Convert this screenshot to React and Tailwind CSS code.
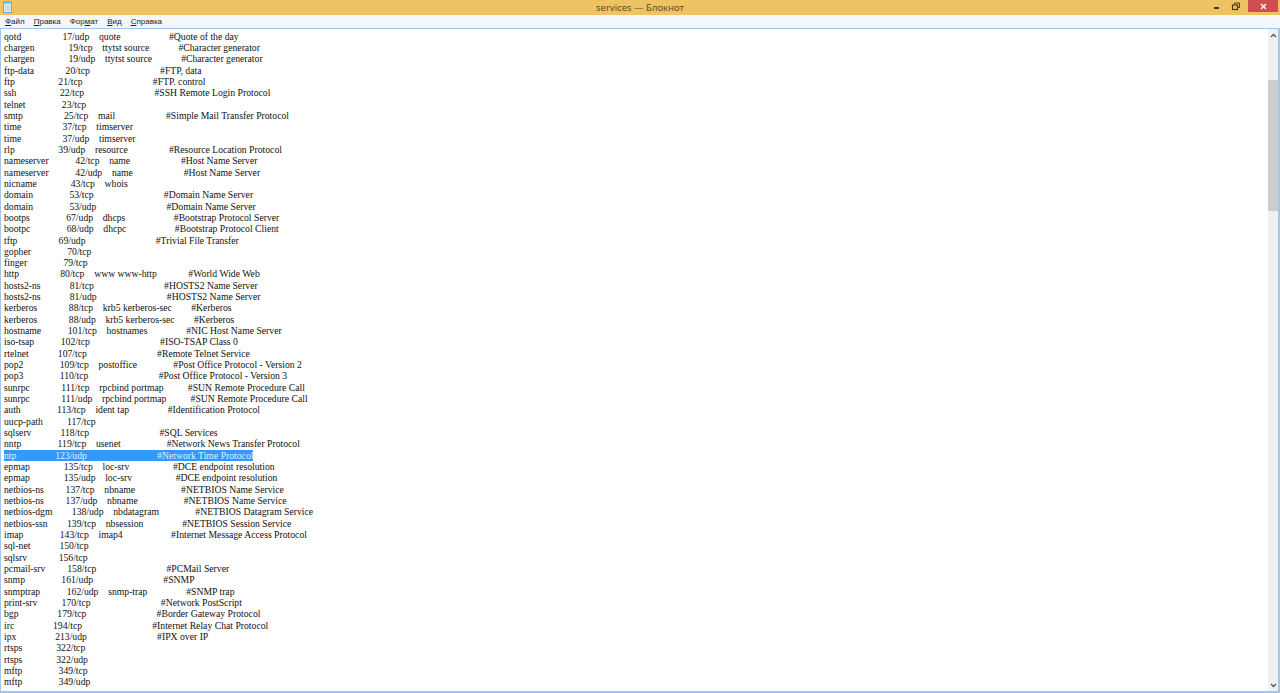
const sp = (n) => ' '.repeat(n);

// name, port, alias, comment
const rows = [
  ['qotd', '17/udp', 'quote', '#Quote of the day'],
  ['chargen', '19/tcp', 'ttytst source', '#Character generator'],
  ['chargen', '19/udp', 'ttytst source', '#Character generator'],
  ['ftp-data', '20/tcp', '', '#FTP, data'],
  ['ftp', '21/tcp', '', '#FTP. control'],
  ['ssh', '22/tcp', '', '#SSH Remote Login Protocol'],
  ['telnet', '23/tcp', '', ''],
  ['smtp', '25/tcp', 'mail', '#Simple Mail Transfer Protocol'],
  ['time', '37/tcp', 'timserver', ''],
  ['time', '37/udp', 'timserver', ''],
  ['rlp', '39/udp', 'resource', '#Resource Location Protocol'],
  ['nameserver', '42/tcp', 'name', '#Host Name Server'],
  ['nameserver', '42/udp', 'name', '#Host Name Server'],
  ['nicname', '43/tcp', 'whois', ''],
  ['domain', '53/tcp', '', '#Domain Name Server'],
  ['domain', '53/udp', '', '#Domain Name Server'],
  ['bootps', '67/udp', 'dhcps', '#Bootstrap Protocol Server'],
  ['bootpc', '68/udp', 'dhcpc', '#Bootstrap Protocol Client'],
  ['tftp', '69/udp', '', '#Trivial File Transfer'],
  ['gopher', '70/tcp', '', ''],
  ['finger', '79/tcp', '', ''],
  ['http', '80/tcp', 'www www-http', '#World Wide Web'],
  ['hosts2-ns', '81/tcp', '', '#HOSTS2 Name Server'],
  ['hosts2-ns', '81/udp', '', '#HOSTS2 Name Server'],
  ['kerberos', '88/tcp', 'krb5 kerberos-sec', '#Kerberos'],
  ['kerberos', '88/udp', 'krb5 kerberos-sec', '#Kerberos'],
  ['hostname', '101/tcp', 'hostnames', '#NIC Host Name Server'],
  ['iso-tsap', '102/tcp', '', '#ISO-TSAP Class 0'],
  ['rtelnet', '107/tcp', '', '#Remote Telnet Service'],
  ['pop2', '109/tcp', 'postoffice', '#Post Office Protocol - Version 2'],
  ['pop3', '110/tcp', '', '#Post Office Protocol - Version 3'],
  ['sunrpc', '111/tcp', 'rpcbind portmap', '#SUN Remote Procedure Call'],
  ['sunrpc', '111/udp', 'rpcbind portmap', '#SUN Remote Procedure Call'],
  ['auth', '113/tcp', 'ident tap', '#Identification Protocol'],
  ['uucp-path', '117/tcp', '', ''],
  ['sqlserv', '118/tcp', '', '#SQL Services'],
  ['nntp', '119/tcp', 'usenet', '#Network News Transfer Protocol'],
  ['ntp', '123/udp', '', '#Network Time Protocol'],
  ['epmap', '135/tcp', 'loc-srv', '#DCE endpoint resolution'],
  ['epmap', '135/udp', 'loc-srv', '#DCE endpoint resolution'],
  ['netbios-ns', '137/tcp', 'nbname', '#NETBIOS Name Service'],
  ['netbios-ns', '137/udp', 'nbname', '#NETBIOS Name Service'],
  ['netbios-dgm', '138/udp', 'nbdatagram', '#NETBIOS Datagram Service'],
  ['netbios-ssn', '139/tcp', 'nbsession', '#NETBIOS Session Service'],
  ['imap', '143/tcp', 'imap4', '#Internet Message Access Protocol'],
  ['sql-net', '150/tcp', '', ''],
  ['sqlsrv', '156/tcp', '', ''],
  ['pcmail-srv', '158/tcp', '', '#PCMail Server'],
  ['snmp', '161/udp', '', '#SNMP'],
  ['snmptrap', '162/udp', 'snmp-trap', '#SNMP trap'],
  ['print-srv', '170/tcp', '', '#Network PostScript'],
  ['bgp', '179/tcp', '', '#Border Gateway Protocol'],
  ['irc', '194/tcp', '', '#Internet Relay Chat Protocol'],
  ['ipx', '213/udp', '', '#IPX over IP'],
  ['rtsps', '322/tcp', '', ''],
  ['rtsps', '322/udp', '', ''],
  ['mftp', '349/tcp', '', ''],
  ['mftp', '349/udp', '', ''],
];

// the file pads with spaces, so the columns wander in a proportional font
const formatRow = ([name, port, alias, comment]) => {
  const width = (port.length > 6 ? 19 : 21) - name.length;
  const left = name + sp(Math.max(1, width)) + port;
  if (!alias && !comment) return left;
  return left + sp(4) + alias.padEnd(25, ' ') + comment;
};

function MenuItem({ before = '', mark, after }) {
  return (
    <span>
      {before}
      <span className="underline">{mark}</span>
      {after}
    </span>
  );
}

export default function App() {
  return (
    <div className="h-[693px] w-[1280px] overflow-hidden flex flex-col bg-[#efc263] font-['Noto_Sans',sans-serif]">
      {/* TITLE BAR */}
      <div className="h-[15px] shrink-0 flex items-start">
        <svg width="11" height="12" viewBox="0 0 11 12" className="ml-[2px] mt-[1px] shrink-0">
          <rect x="1.5" y="1.5" width="8" height="10" fill="#d5edf5" stroke="#7fa6b5" />
          <rect x="1.5" y="0.5" width="8" height="2" fill="#5fb6d6" />
          <path d="M3 5h5M3 7h5M3 9h5" stroke="#a9c4cf" strokeWidth="0.7" />
        </svg>
        <div className="flex-1 text-center text-[9.5px] leading-[15px] text-[#5f4b1f] pl-[61px]">services — Блокнот</div>
        <div className="flex items-start shrink-0">
          <div className="w-[20px] h-[12px] flex items-center justify-center">
            <div className="w-[5px] h-[2px] mt-[3px] bg-[#4a3a14]" />
          </div>
          <svg width="20" height="12" viewBox="0 0 20 12" className="shrink-0">
            <rect x="6.5" y="5" width="5" height="4.5" fill="none" stroke="#4a3a14" strokeWidth="1.2" />
            <path d="M8.5 4V3h5v4.5h-1.5" fill="none" stroke="#4a3a14" />
          </svg>
          <div className="w-[30px] h-[12px] ml-[2px] mr-[2px] bg-[#cf4f4f] flex items-center justify-center">
            <svg width="7" height="7" viewBox="0 0 7 7">
              <path d="M1 1l5 5M6 1l-5 5" stroke="#fff" strokeWidth="1.4" />
            </svg>
          </div>
        </div>
      </div>

      {/* MENU */}
      <div className="h-[13px] shrink-0 bg-[#f5f6f7] flex items-center gap-[9px] pl-[5px] font-['Liberation_Sans',sans-serif] text-[8px] leading-[13px] text-[#222]">
        <MenuItem mark="Ф" after="айл" />
        <MenuItem mark="П" after="равка" />
        <MenuItem before="Фор" mark="м" after="ат" />
        <MenuItem mark="В" after="ид" />
        <MenuItem mark="С" after="правка" />
      </div>

      {/* EDIT AREA */}
      <div className="flex-1 min-h-0 flex bg-white border-t border-b-2 border-r-2 border-l border-[#a4c6e6]">
        <div className="flex-1 min-w-0 overflow-hidden pl-[3px] pt-[1.6px] font-['Liberation_Serif',serif] text-[9.7px] leading-[11.33px] text-[#111] whitespace-pre">
          {rows.map((row, i) => (
            <div key={i} className={row[0] === 'ntp' ? 'w-fit h-[11.33px] bg-[#3399ff] text-[#dfefff]' : 'h-[11.33px]'}>
              {formatRow(row)}
            </div>
          ))}
        </div>

        {/* SCROLLBAR */}
        <div className="w-[10px] shrink-0 bg-[#f0f0f0] flex flex-col">
          <div className="h-[12px] shrink-0 flex items-center justify-center">
            <svg width="7" height="5" viewBox="0 0 7 5">
              <path d="M1 4l2.5-2.5L6 4" fill="none" stroke="#555" strokeWidth="1.4" />
            </svg>
          </div>
          <div className="h-[39px] shrink-0" />
          <div className="h-[131px] shrink-0 bg-[#cdcdcd]" />
          <div className="flex-1" />
          <div className="h-[12px] shrink-0 flex items-center justify-center">
            <svg width="7" height="5" viewBox="0 0 7 5">
              <path d="M1 1l2.5 2.5L6 1" fill="none" stroke="#555" strokeWidth="1.4" />
            </svg>
          </div>
        </div>
      </div>
    </div>
  );
}
